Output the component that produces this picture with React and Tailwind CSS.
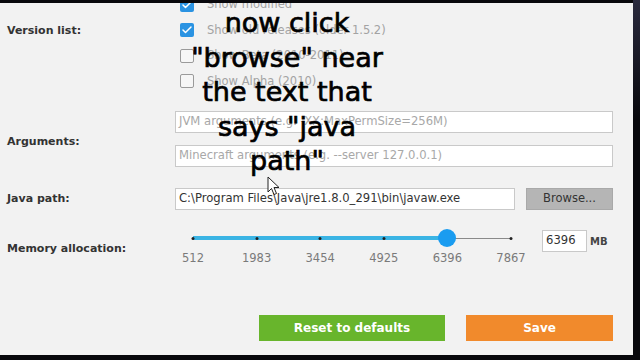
import { Check } from "lucide-react";

const ui = { fontFamily: '"DejaVu Sans", Verdana, sans-serif' };

function Box({ checked }) {
  return checked ? (
    <span className="flex h-[14px] w-[14px] items-center justify-center rounded-[2px] bg-[#2a93e2]">
      <Check size={12} strokeWidth={3} color="white" />
    </span>
  ) : (
    <span className="h-[14px] w-[14px] rounded-[2px] border border-[#9a9a9a] bg-[#f6f6f6]" />
  );
}

function Option({ checked, label }) {
  return (
    <div className="flex h-[25.5px] items-center gap-[13px] pl-[5px]">
      <Box checked={checked} />
      <span className="text-[11.5px] text-[#a3a3a3]">{label}</span>
    </div>
  );
}

function Label({ children, className = "" }) {
  return (
    <div className={`w-[175px] shrink-0 pl-[7px] text-[11px] font-bold text-[#333] ${className}`}>
      {children}
    </div>
  );
}

function Field({ value, placeholder, className = "" }) {
  return (
    <div
      className={`flex h-[22px] items-center overflow-hidden whitespace-nowrap border border-[#c9c9c9] bg-white px-[3px] text-[11.6px] ${
        value ? "text-[#333]" : "text-[#a8a8a8]"
      } ${className}`}
    >
      {value || placeholder}
    </div>
  );
}

const ticks = ["512", "1983", "3454", "4925", "6396", "7867"];

function Slider() {
  return (
    <div className="ml-[-2px] w-[358px]">
      <div className="relative mx-[20px] h-[20px]">
        <div className="absolute left-0 right-0 top-[9.5px] h-px bg-[#8a8a8a]" />
        <div className="absolute left-0 top-[8px] h-[4px] w-[80%] bg-[#3bb4e4]" />
        {ticks.map((t, i) => (
          <span
            key={t}
            className="absolute top-[8.5px] h-[3px] w-[3px] -translate-x-1/2 rounded-full bg-[#222]"
            style={{ left: `${i * 20}%` }}
          />
        ))}
        <span className="absolute left-[80%] top-[1px] h-[18px] w-[18px] -translate-x-1/2 rounded-full bg-[#1a9cf0]" />
      </div>
      <div className="mt-[2px] flex justify-between">
        {ticks.map((t) => (
          <span key={t} className="w-[40px] text-center text-[11.5px] text-[#7a7a7a]">
            {t}
          </span>
        ))}
      </div>
    </div>
  );
}

export default function App() {
  return (
    <div className="flex h-[360px] w-[640px] bg-[#08080c]" style={ui}>
      <div className="relative mt-[3px] h-[352px] w-[633px] overflow-hidden bg-[#f2f2f2]">
        {/* Version list */}
        <div className="mt-[-11px] flex">
          <Label className="pt-[31px]">Version list:</Label>
          <div className="flex flex-col">
            <Option checked label="Show modified" />
            <Option checked label="Show old releases (older 1.5.2)" />
            <Option label="Show Beta (2010-2011)" />
            <Option label="Show Alpha (2010)" />
          </div>
        </div>

        {/* Arguments */}
        <div className="mt-[17px] flex items-center">
          <Label className="pt-[6px]">Arguments:</Label>
          <div className="flex w-[438px] flex-col gap-[12px]">
            <Field placeholder="JVM arguments (e.g. -XX:MaxPermSize=256M)" />
            <Field placeholder="Minecraft arguments (e.g. --server 127.0.0.1)" />
          </div>
        </div>

        {/* Java path */}
        <div className="mt-[21px] flex items-center">
          <Label>Java path:</Label>
          <Field className="w-[340px]" value="C:\Program Files\Java\jre1.8.0_291\bin\javaw.exe" />
          <button className="ml-[11px] h-[22px] w-[87px] border border-[#a9a9a9] bg-[#b5b5b5] text-[11.5px] text-[#333]">
            Browse...
          </button>
        </div>

        {/* Memory allocation */}
        <div className="mt-[18px] flex items-start">
          <Label className="pt-[13px]">Memory allocation:</Label>
          <Slider />
          <div className="ml-[11px] mt-[2px] flex items-center gap-[3px]">
            <Field className="w-[45px]" value="6396" />
            <span className="text-[10px] font-bold text-[#444]">MB</span>
          </div>
        </div>

        {/* Buttons */}
        <div className="mt-[48px] flex gap-[21px] pl-[259px]">
          <button className="h-[26px] w-[186px] bg-[#68b52c] text-[12px] font-bold text-white">
            Reset to defaults
          </button>
          <button className="h-[26px] w-[147px] bg-[#f18a2c] text-[12px] font-bold text-white">
            Save
          </button>
        </div>

        {/* Caption overlay */}
        <div className="absolute left-[137px] top-[3px] w-[300px] text-center text-[27px] leading-[34.5px] text-black [-webkit-text-stroke:0.7px_black]">
          now click
          <br />
          "browse" near
          <br />
          the text that
          <br />
          says "java
          <br />
          path"
        </div>

        {/* Mouse pointer */}
        <svg className="absolute left-[267px] top-[173px]" width="13" height="20" viewBox="0 0 13 20">
          <path d="M1 1 L1 16 L4.5 12.5 L7 18.5 L9.5 17.5 L7 11.5 L12 11.5 Z" fill="white" stroke="#222" strokeWidth="1" strokeLinejoin="round" />
        </svg>
      </div>
      <div className="h-[120px] flex-1 bg-gradient-to-b from-[#2a2a3e] to-transparent" />
    </div>
  );
}
